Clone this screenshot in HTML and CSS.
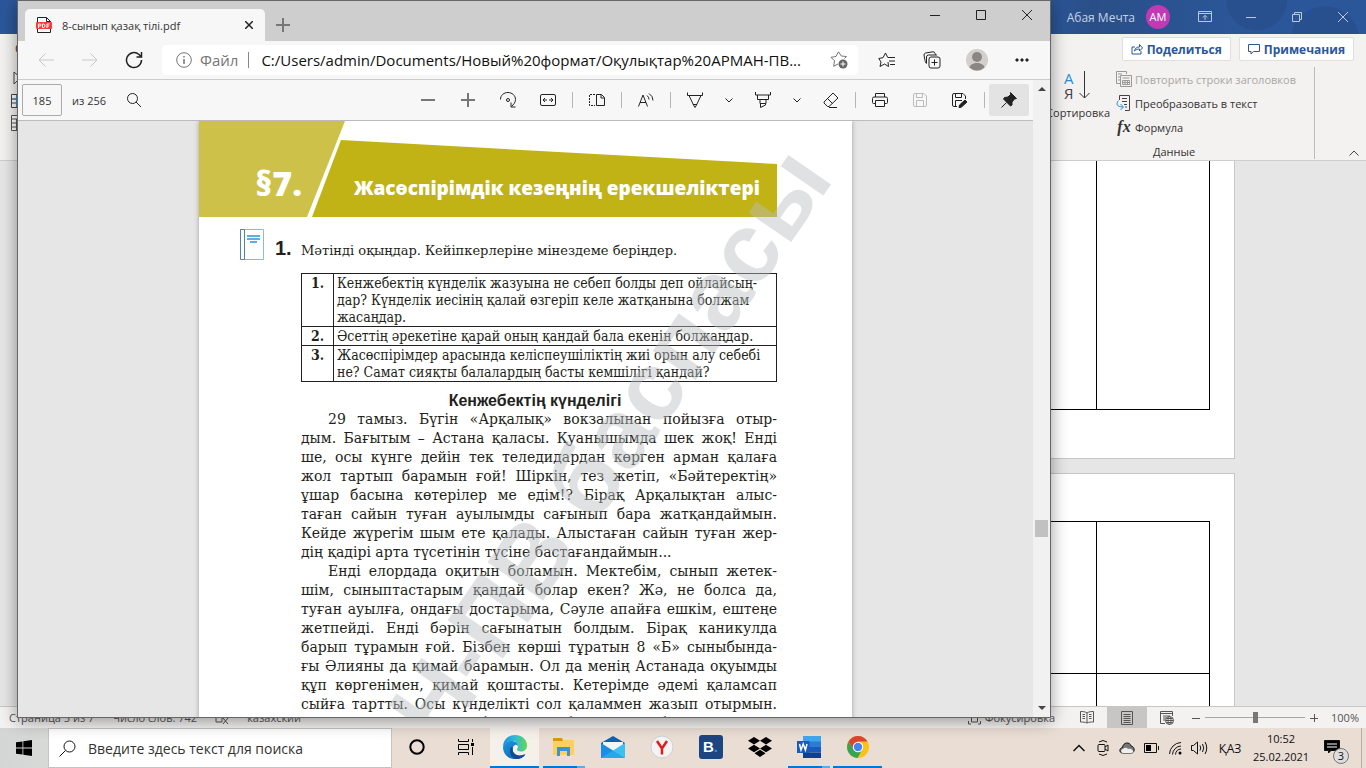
FILE: index.html
```html
<!DOCTYPE html>
<html lang="kk">
<head>
    <meta charset="UTF-8">
    <meta name="viewport" content="width=device-width, initial-scale=1.0">
    <title>8-сынып қазақ тілі.pdf</title>
    <link rel="stylesheet" href="styles.css">
</head>
<body>
    <div class="desktop">

        <!-- Word window -->
        <div class="word">
            <div class="word-title">
                <span class="user-name">Абая Мечта</span>
                <span class="user-badge">АМ</span>
                <button class="win-btn" aria-label="Параметры ленты"><svg width="14" height="12" viewBox="0 0 14 12"><path d="M.5.5h13v10H.5zM.5 2.500h13M7 9V4.500M4.800 6.500L7 4.300l2.200 2.200"/></svg></button>
                <button class="win-btn" aria-label="Свернуть"><svg width="10" height="10" viewBox="0 0 10 10"><path d="M0 5.500h10"/></svg></button>
                <button class="win-btn" aria-label="Окно"><svg width="10" height="10" viewBox="0 0 10 10"><path d="M.5 2.500h7v7h-7zM2.500 2.500v-2h7v7h-2"/></svg></button>
                <button class="win-btn" aria-label="Закрыть"><svg width="10" height="10" viewBox="0 0 10 10"><path d="M0 0l10 10M10 0L0 10"/></svg></button>
            </div>

            <div class="ribbon">
                <div class="ribbon-left">
                    <span class="ribbon-cut">С</span>
                    <svg width="14" height="16" viewBox="0 0 14 16"><path d="M3 1v12l3-3 2 5 2-1-2-5h4z" fill="#fff" stroke="#444"/></svg>
                    <svg width="16" height="14" viewBox="0 0 16 14"><path d="M.5.5h15v13H.5zM.5 5h15M.5 9h15M5.500.5v13" fill="#fff" stroke="#444"/><path d="M5.500 1v12M1 5h14" stroke="#2b8fd6"/></svg>
                    <svg width="16" height="16" viewBox="0 0 16 16"><path d="M.5.5h15v15H.5zM.5 4h15M.5 8h15M.5 12h15M5.500 4v11" fill="#fff" stroke="#555"/></svg>
                </div>
                <div class="ribbon-right">
                    <div class="ribbon-actions">
                        <button class="action"><svg width="12" height="12" viewBox="0 0 12 12"><path d="M4 4H1v7h9V8M3.500 8c.5-3 2.500-4 5-4V1.500L11.500 5 8.500 8V6c-2 0-3.500.5-5 2z"/></svg>Поделиться</button>
                        <button class="action"><svg width="12" height="12" viewBox="0 0 12 12"><path d="M.5 1.500h11v7h-6L3 11V8.500H.5z"/></svg>Примечания</button>
                    </div>
                    <div class="ribbon-body">
                        <button class="sort">
                            <svg width="30" height="30" viewBox="0 0 30 30"><text x="1" y="13" class="letter-a">А</text><text x="1" y="28" class="letter-ya">Я</text><path d="M21.500 0v27M16.500 22l5 5 5-5" fill="none" stroke="#333"/></svg>
                            Сортировка
                        </button>
                        <div class="data-group">
                            <button class="cmd off"><svg width="16" height="16" viewBox="0 0 16 16"><path d="M4 12.500H.5V.5h10V3M2 3h4M2 6h2M2 9h2" /><path d="M4.500 4.500h11v11h-11zM6.500 7h7M6.500 9.500h7v4h-7zM9 9.500v4M11.500 9.500v4M6.500 11.500h7"/></svg>Повторить строки заголовков</button>
                            <button class="cmd"><svg width="16" height="16" viewBox="0 0 16 16"><path d="M3.500 5V.5h10v15H9M6 3.500h5M6 6.500h5M8 9.500h3M9 12h2"/><path class="blue" d="M2.500 5.500C-.5 9 1 12 7 12M4.500 9l3 3-3 3"/></svg>Преобразовать в текст</button>
                            <button class="cmd"><i class="fx">fx</i>Формула</button>
                            <span class="group-name">Данные</span>
                        </div>
                        <button class="collapse" aria-label="Свернуть ленту"><svg width="10" height="6" viewBox="0 0 10 6"><path d="M.5 5.500L5 1l4.500 4.500" fill="none" stroke="#444"/></svg></button>
                    </div>
                </div>
            </div>

            <div class="word-area">
                <div class="sheet sheet-first">
                    <table class="grid"><tr><td></td><td></td></tr></table>
                </div>
                <div class="sheet sheet-next">
                    <table class="grid"><tr class="tall"><td></td><td></td></tr><tr class="tall"><td></td><td></td></tr></table>
                </div>
            </div>

            <div class="status">
                <span>Страница 5 из 7</span>
                <span>Число слов: 742</span>
                <svg width="14" height="14" viewBox="0 0 14 14"><path d="M1 1v10h6V1zM8 7l5 6M13 7l-5 6"/></svg>
                <span>казахский</span>
                <span class="status-gap"></span>
                <span class="focus"><svg width="13" height="14" viewBox="0 0 13 14"><path d="M.5 4V1H3M10 1h2.500v3M12.500 10v3H10M3 13H.5v-3M3.500 4h6v7h-6z"/></svg>Фокусировка</span>
                <button class="view" aria-label="Режим чтения"><svg width="14" height="13" viewBox="0 0 14 13"><path d="M7 2v10M7 2C5 .5 2.500.5.5.5v10.500c2.500 0 4.500 0 6.500 1 2-1 4-1 6.500-1V.5C11.500.5 9 .5 7 2M2.500 3.500H5M2.500 5.500H5M2.500 7.500H5M9 3.500h2.500M9 5.500h2.500M9 7.500h2.500"/></svg></button>
                <button class="view on" aria-label="Разметка страницы"><svg width="12" height="14" viewBox="0 0 12 14"><path d="M.5.5h11v13H.5zM2.500 3.500h7M2.500 5.500h7M2.500 7.500h7M2.500 9.500h7M2.500 11.500h7"/></svg></button>
                <button class="view" aria-label="Веб-документ"><svg width="14" height="14" viewBox="0 0 14 14"><path d="M5 12.500H.5V.5h12V5M.5 2.500h12M3 5h7M3 7h3M3 9h2"/><circle cx="9.500" cy="9.500" r="4"/><path d="M5.500 9.500h8M9.500 5.500c-2 2-2 6 0 8c2-2 2-6 0-8M6.500 7.500h6M6.500 11.500h6"/></svg></button>
                <button class="zoom-btn" aria-label="Уменьшить"><svg width="8" height="8" viewBox="0 0 8 8"><path d="M0 4.500h8"/></svg></button>
                <input class="zoom" type="range" min="0" max="100" value="50" aria-label="Масштаб">
                <button class="zoom-btn" aria-label="Увеличить"><svg width="8" height="8" viewBox="0 0 8 8"><path d="M0 4.500h8M4.500 0v8"/></svg></button>
                <span class="percent">100%</span>
            </div>
        </div>

        <!-- Browser window -->
        <div class="edge">
            <div class="tabs">
                <div class="tab">
                    <svg width="16" height="16" viewBox="0 0 16 16"><path d="M1.500.5h9l4 4v11h-13z" fill="#fff" stroke="#222"/><path d="M10.500.5v4h4" fill="none" stroke="#222"/><rect class="pdf-mark" y="5" width="16" height="7" rx="1"/><path d="M2.500 11V7h1.500q1 0 1 1t-1 1H2.500M6.500 7v3.500h1q1.500 0 1.500-1.700T7.500 7zM11 11V7h2.500M11 9h2" fill="none" stroke="#fff"/></svg>
                    <span class="tab-name">8-сынып қазақ тілі.pdf</span>
                    <button aria-label="Закрыть вкладку"><svg width="8" height="8" viewBox="0 0 8 8"><path d="M0 0l8 8M8 0L0 8" stroke="#222" stroke-width="1.500"/></svg></button>
                </div>
                <button class="new-tab" aria-label="Новая вкладка"><svg class="soft" width="14" height="14" viewBox="0 0 14 14"><path d="M7 0v14M0 7h14"/></svg></button>
                <div class="edge-controls">
                    <button aria-label="Свернуть"><svg width="10" height="10" viewBox="0 0 10 10"><path d="M0 5.500h10"/></svg></button>
                    <button aria-label="Развернуть"><svg width="10" height="10" viewBox="0 0 10 10"><path d="M.5.5h9v9h-9z"/></svg></button>
                    <button aria-label="Закрыть"><svg width="10" height="10" viewBox="0 0 10 10"><path d="M0 0l10 10M10 0L0 10"/></svg></button>
                </div>
            </div>

            <div class="nav">
                <button class="nav-btn dim" aria-label="Назад"><svg width="16" height="14" viewBox="0 0 16 14"><path d="M16 7H1M7.500.5L1 7l6.500 6.500"/></svg></button>
                <button class="nav-btn dim" aria-label="Вперед"><svg width="16" height="14" viewBox="0 0 16 14"><path d="M0 7h15M8.500.5L15 7l-6.500 6.500"/></svg></button>
                <button class="nav-btn refresh" aria-label="Обновить"><svg width="18" height="18" viewBox="0 0 18 18"><path d="M16.500 9A7.500 7.500 0 1 1 14 3.500l2 2M16.500 1v5h-5" stroke-width="1.500"/></svg></button>
                <div class="address">
                    <svg width="16" height="16" viewBox="0 0 16 16"><circle cx="8" cy="8" r="7.300"/><path d="M8 7v5M8 4v1.500" stroke-width="1.500"/></svg>
                    <label for="url">Файл</label>
                    <input id="url" type="text" value="C:/Users/admin/Documents/Новый%20формат/Оқулықтар%20АРМАН-ПВ...">
                    <button aria-label="Добавить в избранное"><svg width="18" height="18" viewBox="0 0 18 18"><path d="M14.500 7.500l2-2-5.200-.5L8.500.8 6 5.500l-5 .8 3.500 3.500-.8 5.500L8 13"/><circle cx="13" cy="13" r="4.500" fill="#666" stroke="none"/><path d="M13 10.500v5M10.500 13h5" stroke="#fff"/></svg></button>
                </div>
                <button class="nav-btn wide" aria-label="Избранное"><svg width="18" height="16" viewBox="0 0 18 16"><path d="M10 10l.5 4.500L6.500 12l-4.500 2.500 1-4.500L.8 6.500l4.200-.8L7.500 1l2 4M9.500 5.500H17M11 9h6M12 12.500h5"/></svg></button>
                <button class="nav-btn wide" aria-label="Коллекции"><svg width="18" height="18" viewBox="0 0 18 18"><rect x="6" y="6" width="11" height="11" rx="2"/><path d="M11.500 8.500v6M8.500 11.500h6M4 12.500C2 12 2.500 11 1.500 7L1 4q0-1.500 1.500-2L10 .8q1.500 0 2 1.500l.5 1.500M3.500 12V6q0-2 2-2H14"/></svg></button>
                <button class="nav-btn wide" aria-label="Профиль"><svg class="person" width="22" height="22" viewBox="0 0 22 22"><circle cx="11" cy="11" r="11" fill="#d2cfcc"/><circle cx="11" cy="8" r="5" fill="#8b8683"/><path d="M3.500 18.500c1-6 14-6 15 0a11 11 0 0 1-15 0z" fill="#8b8683"/></svg></button>
                <button class="nav-btn wide" aria-label="Меню"><svg width="14" height="4" viewBox="0 0 14 4"><path d="M1 1h2v2H1zM6 1h2v2H6zM11 1h2v2h-2z" fill="#222"/></svg></button>
            </div>

            <div class="viewer">
                <div class="viewer-main">
                    <div class="pdf-bar">
                        <input class="page-no" id="page" type="text" value="185">
                        <label for="page">из 256</label>
                        <button class="find" aria-label="Найти"><svg width="16" height="16" viewBox="0 0 16 16"><circle cx="6.500" cy="6.500" r="5"/><path d="M10 10l5 5"/></svg></button>
                        <div class="tools">
                            <button aria-label="Уменьшить"><svg class="soft" width="14" height="14" viewBox="0 0 14 14"><path d="M0 7h14"/></svg></button>
                            <button aria-label="Увеличить"><svg class="soft" width="14" height="14" viewBox="0 0 14 14"><path d="M0 7h14M7 0v14"/></svg></button>
                            <button aria-label="Повернуть"><svg width="16" height="16" viewBox="0 0 16 16"><path d="M.5 7.500C.5 3 4 .5 8 .5s7.500 3 7.500 7c0 3-2 5-4 7M11 10.500V15h4.500"/><circle cx="8" cy="8" r="1.500"/></svg></button>
                            <button aria-label="По ширине"><svg width="16" height="12" viewBox="0 0 16 12"><rect x=".5" y=".5" width="15" height="11" rx="1.500"/><path d="M3 6h4M9 6h4M5 4L3 6l2 2M11 4l2 2-2 2"/></svg></button>
                            <span class="sep"></span>
                            <button aria-label="Просмотр страницы"><svg width="16" height="12" viewBox="0 0 16 12"><path d="M7.500.5h5l3 3v8h-8zM12 .5V4h3.500"/><path d="M6 .5H.5v11H6" stroke-dasharray="2 1"/></svg></button>
                            <span class="sep"></span>
                            <button aria-label="Прочесть вслух"><svg width="16" height="14" viewBox="0 0 16 14"><path d="M.5 13.500L5 2l4.500 11.500M2 9.500h6M9 2.500q2 1.500 2 4M11 .5q4 2.500 4 7"/></svg></button>
                            <span class="sep"></span>
                            <button aria-label="Рисование"><svg width="16" height="16" viewBox="0 0 16 16"><path d="M.5.5v3h15v-3M2 3.500l4.500 9.500L8 15.500 9.500 13 14 3.500M6 12.500h4"/></svg></button>
                            <button class="drop" aria-label="Параметры пера"><svg width="8" height="5" viewBox="0 0 8 5"><path d="M.5.5L4 4 7.500.5"/></svg></button>
                            <button aria-label="Выделение"><svg width="16" height="16" viewBox="0 0 16 16"><path d="M.5 0v3h15V0M2.500 3v4.500h11V3M5 7.500v4h6v-4M5.500 11.500v4l5-2.500v-1.500"/></svg></button>
                            <button class="drop" aria-label="Параметры выделения"><svg width="8" height="5" viewBox="0 0 8 5"><path d="M.5.5L4 4 7.500.5"/></svg></button>
                            <button aria-label="Ластик"><svg width="16" height="16" viewBox="0 0 16 16"><path d="M1 10L10 1l5 5-9 8.500H4.500L1 11zM4.500 6.500l5 5M6 15.500h8"/></svg></button>
                            <span class="sep"></span>
                            <button aria-label="Печать"><svg width="16" height="14" viewBox="0 0 16 14"><path d="M3.500 10.500h-2q-1 0-1-1v-4q0-1.500 1.500-1.500h12q1.500 0 1.500 1.500v4q0 1-1 1h-2M3.500 4V.5h9V4M3.500 7.500h9v6h-9z"/></svg></button>
                            <button class="disabled" aria-label="Сохранить"><svg width="14" height="14" viewBox="0 0 14 14"><path d="M.5 2q0-1.500 1.500-1.500h9l2.500 2.500v9q0 1.500-1.500 1.500H2Q.5 13.500.5 12zM3.500.5v4h6v-4M3.500 13.500v-6h7v6"/></svg></button>
                            <button aria-label="Сохранить как"><svg width="16" height="15" viewBox="0 0 16 15"><path d="M13.500 6V3L11 .5H2Q.5.5.5 2v10q0 1.500 1.500 1.500h3M3.500.5v4h6v-4M3.500 13.500v-6H10"/><path d="M7.500 12l5.500-5 2 2-5.500 5-2.500.7z" fill="#222"/></svg></button>
                            <span class="sep"></span>
                            <button class="pinned" aria-label="Закрепить панель"><svg width="16" height="16" viewBox="0 0 16 16"><path d="M9.500.5l6 6-2 .5-2.500 3 0 3-1.500 1L2.500 7l1-1.500 3.500-.5 2.500-2.500z" fill="#222"/><path d="M5.500 10.500L.5 15.500"/></svg></button>
                        </div>
                    </div>

                    <div class="doc">
                        <article class="page">
                            <header class="section-head">
                                <div class="section-no">§7.</div>
                                <h1>Жасөспірімдік кезеңнің ерекшеліктері</h1>
                            </header>

                            <div class="task">
                                <svg width="24" height="31" viewBox="0 0 24 31"><path class="cover" d="M.5.5h23v30H.5z"/><path class="spine" d="M.5.5h4v30h-4z"/><path class="lines" d="M7 7h13M7 10h13M10 13h7"/></svg>
                                <b class="task-no">1.</b>
                                <span>Мәтінді оқыңдар. Кейіпкерлеріне мінездеме беріңдер.</span>
                            </div>

                            <table class="questions">
                                <tr><th>1.</th><td>Кенжебектің күнделік жазуына не себеп болды деп ойлайсың-<br>дар? Күнделік иесінің қалай өзгеріп келе жатқанына болжам<br>жасаңдар.</td></tr>
                                <tr><th>2.</th><td>Әсеттің әрекетіне қарай оның қандай бала екенін болжаңдар.</td></tr>
                                <tr><th>3.</th><td>Жасөспірімдер арасында келіспеушіліктің жиі орын алу себебі<br>не? Самат сияқты балалардың басты кемшілігі қандай?</td></tr>
                            </table>

                            <div class="story">
                                <h2>Кенжебектің күнделігі</h2>
                                <p>29 тамыз. Бүгін «Арқалық» вокзалынан пойызға отыр-<br>дым. Бағытым – Астана қаласы. Қуанышымда шек жоқ! Енді<br>ше, осы күнге дейін тек теледидардан көрген арман қалаға<br>жол тартып барамын ғой! Шіркін, тез жетіп, «Бәйтеректің»<br>ұшар басына көтерілер ме едім!? Бірақ Арқалықтан алыс-<br>таған сайын туған ауылымды сағынып бара жатқандаймын.<br>Кейде жүрегім шым ете қалады. Алыстаған сайын туған жер-</p>
                                <p class="last-line">дің қадірі арта түсетінін түсіне бастағандаймын...</p>
                                <p>Енді елордада оқитын боламын. Мектебім, сынып жетек-<br>шім, сыныптастарым қандай болар екен? Жә, не болса да,<br>туған ауылға, ондағы достарыма, Сәуле апайға ешкім, ештеңе<br>жетпейді. Енді бәрін сағынатын болдым. Бірақ каникулда<br>барып тұрамын ғой. Бізбен көрші тұратын 8 «Б» сыныбында-<br>ғы Әлияны да қимай барамын. Ол да менің Астанада оқуымды<br>құп көргенімен, қимай қоштасты. Кетерімде әдемі қаламсап<br>сыйға тартты. Осы күнделікті сол қаламмен жазып отырмын.<br>Айналама қарасам, бәрі де бейтаныс, бөлек жандар</p>
                            </div>

                            <svg class="watermark" width="653" height="600" viewBox="0 0 653 600"><text transform="translate(636 58) rotate(-55.300)">АРМАН-ПВ баспасы</text></svg>
                        </article>
                    </div>
                </div>

                <div class="scroll">
                    <svg width="8" height="4" viewBox="0 0 8 4"><path d="M0 4l4-4 4 4z" fill="#444"/></svg>
                    <span class="thumb"></span>
                    <svg width="8" height="4" viewBox="0 0 8 4"><path d="M0 0l4 4 4-4z" fill="#444"/></svg>
                </div>
            </div>
        </div>
    </div>

    <!-- Taskbar -->
    <div class="taskbar">
        <button class="start" aria-label="Пуск"><svg width="16" height="16" viewBox="0 0 16 16"><path d="M0 2.300L6.500 1.400v6.200H0zM7.300 1.200L16 0v7.600H7.300zM0 8.400h6.500v6.200L0 13.700zM7.300 8.400H16V16l-8.700-1.200z"/></svg></button>
        <label class="search">
            <svg width="17" height="17" viewBox="0 0 17 17"><circle cx="10.500" cy="6.500" r="5.500"/><path d="M6.500 10.500L.5 16.500"/></svg>
            <input type="text" placeholder="Введите здесь текст для поиска" aria-label="Поиск">
        </label>
        <button class="task-btn" aria-label="Кортана"><svg width="16" height="16" viewBox="0 0 16 16"><circle cx="8" cy="8" r="6.700" fill="none" stroke="#000" stroke-width="2"/></svg></button>
        <button class="task-btn" aria-label="Представление задач"><svg width="18" height="16" viewBox="0 0 18 16"><path d="M1.500 0v2.500h10V0M1.500 16v-2.500h10V16M1.500 5.500h10v5h-10zM15.500 0v3M15.500 8v8" fill="none" stroke="#000"/><path d="M14 4h3v3h-3z"/></svg></button>
        <button class="task-btn active running" aria-label="Edge">
            <svg width="26" height="26" viewBox="0 0 26 26">
                <defs>
                    <linearGradient id="eg1" x1="0" x2="1"><stop offset="0" stop-color="#1d8fe0"/><stop offset=".5" stop-color="#31bdd6"/><stop offset="1" stop-color="#62d84e"/></linearGradient>
                    <linearGradient id="eg2" x1="0" y1="0" x2="1" y2="1"><stop offset="0" stop-color="#1b9de2"/><stop offset="1" stop-color="#0f52a0"/></linearGradient>
                </defs>
                <path d="M1 13C1 6 6 1 13 1c8 0 12 5.500 12 10.500 0 4-3 6-6 6-2.500 0-4-1-4-2s1-1.500 1-3.500C16 9 13 7 9.500 7 5 7 2 10 1 13z" fill="url(#eg1)"/>
                <path d="M1 13c1-4 4-6 8-6 4.500 0 7 2.500 7 5-1-1-2-1.500-3-1-4 2-3 9 3 10.500 3 .8 6 0 7.500-1C21 24 17 25.500 13.500 25 6 25 1 20 1 13z" fill="url(#eg2)"/>
                <path d="M9 13c-2 4-1 10 5 12 4 0 7.500-1.500 9.500-5-3 1.500-7 2-10 .5C11 19 10 16.500 11 13.500z" fill="#104b94"/>
            </svg>
        </button>
        <button class="task-btn running multi" aria-label="Проводник"><svg width="22" height="18" viewBox="0 0 22 18"><path d="M0 0h8l2 2h11v15H0z" fill="#fbd05f"/><path d="M0 0h9l1 3H0z" fill="#d99513"/><path d="M4 9h13v9h-3v-5H7v5H4z" fill="#3a94d6"/></svg></button>
        <button class="task-btn" aria-label="Почта"><svg width="24" height="22" viewBox="0 0 24 22"><path d="M0 7L12 0l12 7v5H0z" fill="#0a64b0"/><path d="M2 6h20v8L12 18 2 13z" fill="#f5f5f5"/><path d="M0 7l24 15H0z" fill="#1b8ee0"/><path d="M24 7v15L12 14.500z" fill="#3cc0f2"/><path d="M0 22l12-7.500L24 22z" fill="#28a8ea"/></svg></button>
        <button class="task-btn" aria-label="Яндекс"><svg width="24" height="24" viewBox="0 0 24 24"><circle cx="12" cy="12" r="11" fill="#f4f4f4" stroke="#d0d0d0"/><path d="M7 6l5 7.500L17 6M12 13v6.500" fill="none" stroke="#e21c1c" stroke-width="2.500"/></svg></button>
        <button class="task-btn" aria-label="Booking"><span class="booking">B<i>.</i></span></button>
        <button class="task-btn" aria-label="Dropbox"><svg width="24" height="20" viewBox="0 0 24 20"><path d="M6 0l6 3.700-6 3.800L0 3.700zM18 0l6 3.700-6 3.800-6-3.800zM6 7.700l6 3.800-6 3.800-6-3.800zM18 7.700l6 3.800-6 3.800-6-3.800zM12 12.700l5.500 3.600L12 20l-5.500-3.700z"/></svg></button>
        <button class="task-btn running multi" aria-label="Word"><svg width="24" height="22" viewBox="0 0 24 22"><path d="M6 0h18v6H6z" fill="#41a5ee"/><path d="M6 5.500h18V11H6z" fill="#2b7cd3"/><path d="M6 11h18v5.500H6z" fill="#185abd"/><path d="M6 16.500h18V22H6z" fill="#103f91"/><path d="M0 5h12.500v12H0z" fill="#185abd"/><path d="M2.500 8l1.500 6 2.200-6 2.200 6L10 8" fill="none" stroke="#fff" stroke-width="1.500"/></svg></button>
        <button class="task-btn running" aria-label="Chrome"><svg width="22" height="22" viewBox="0 0 22 22"><circle cx="11" cy="11" r="11" fill="#fbc116"/><path d="M11 5.500h9.500A11 11 0 0 0 1.500 5.500L6 13z" fill="#dc4437"/><path d="M1.500 5.500A11 11 0 0 0 10.500 22L15 14l-9-1z" fill="#35a552"/><circle cx="11" cy="11" r="5.200" fill="#fff"/><circle cx="11" cy="11" r="4.200" fill="#4386f4"/></svg></button>

        <div class="tray">
            <button aria-label="Скрытые значки"><svg width="12" height="8" viewBox="0 0 12 8"><path d="M.5 7L6 1.500 11.500 7" stroke-width="1.500"/></svg></button>
            <button aria-label="Собрание"><svg width="12" height="16" viewBox="0 0 12 16"><path d="M2 2q4-3 8 0M2 14q4 3 8 0"/><rect x="1" y="4.500" width="7" height="7" rx="1"/><path d="M8 7l3-2v6L8 9"/></svg></button>
            <button aria-label="Облако"><svg width="16" height="12" viewBox="0 0 16 12"><path d="M3.500 11C0 11 0 6 3.500 5.500 4 0 11-.5 12 4c4 .5 4.500 7 0 7z" fill="#777"/><path d="M3.500 11c-2-1-1.500-4 .5-4 2-2 4-1 5 0 3-1 5 1 5.500 3l-2 1z" fill="#eee" stroke="none"/></svg></button>
            <button aria-label="Батарея"><svg width="15" height="10" viewBox="0 0 15 10"><path d="M.5.5h12v9H.5zM14.500 3v4"/><path d="M2 2h5v6H2z" fill="#000" stroke="none"/></svg></button>
            <button aria-label="Сеть"><svg width="13" height="13" viewBox="0 0 13 13"><path d="M.5 12A12 12 0 0 1 12 .5M3.500 12.500A9 9 0 0 1 12 4M6.500 12.500A6 6 0 0 1 12 7"/><circle cx="11" cy="11" r="1.500" fill="#000" stroke="none"/></svg></button>
            <button aria-label="Звук"><svg width="17" height="14" viewBox="0 0 17 14"><path d="M.5 4.500h2L6.500 1v12L2.500 9.500h-2zM9 4.500q1.500 2.500 0 5M11.500 3q2.500 4 0 8M14 1q3.500 6 0 12"/></svg></button>
            <span class="lang">ҚАЗ</span>
            <div class="clock"><span>10:52</span><span>25.02.2021</span></div>
            <button class="notes" aria-label="Уведомления"><svg width="17" height="16" viewBox="0 0 17 16"><path d="M.5.5h15v10H7L4.500 13v-2.500h-4z" fill="#000"/><path d="M3 4h10M3 7h10" stroke="#fff"/></svg><span class="count">3</span></button>
        </div>
    </div>
</body>
</html>
```
FILE: styles.css
```css
* {
    box-sizing: border-box;
}

body {
    margin: 0;
    height: 100vh;
    display: flex;
    flex-direction: column;
    overflow: hidden;
    font-family: "Open Sans", "Noto Sans", sans-serif;
    font-size: 12px;
    color: #333;
}

button {
    display: flex;
    align-items: center;
    justify-content: center;
    padding: 0;
    border: none;
    background: none;
    font: inherit;
    color: inherit;
    white-space: nowrap;
}

input {
    font: inherit;
    color: inherit;
    border: none;
    outline: none;
    min-width: 0;
}

svg {
    flex: none;
}

.desktop {
    position: relative;
    flex: 1;
    min-height: 0;
}

/* Word */
.word {
    height: 100%;
    display: flex;
    flex-direction: column;
    background: #e6e6e6;
}

.word-title {
    flex: none;
    height: 34px;
    display: flex;
    justify-content: flex-end;
    align-items: center;
    color: #c5d1e5;
    background: radial-gradient(circle at 92% 0, #28508f 30px, transparent 31px),
                radial-gradient(circle at 97% 120%, #28508f 34px, transparent 35px),
                linear-gradient(90deg, #2b579a 76%, #2a4f88 80%, #2b579a 92%);
}

.word-title svg {
    fill: none;
    stroke: #b9c8df;
}

.user-badge {
    width: 24px;
    height: 24px;
    margin: 0 12px 0 11px;
    border-radius: 50%;
    background: #c239b3;
    color: #fff;
    font-size: 11px;
    line-height: 24px;
    text-align: center;
}

.win-btn {
    width: 46px;
    height: 32px;
}

.ribbon {
    flex: none;
    display: flex;
    justify-content: space-between;
    height: 127px;
    background: #f3f2f1;
    border-bottom: 1px solid #d0cecc;
}

.ribbon-left {
    display: flex;
    flex-direction: column;
    gap: 7px;
    padding: 6px 0 0 11px;
}

.ribbon-cut {
    height: 24px;
    padding-left: 4px;
    line-height: 18px;
}

.ribbon-right {
    display: flex;
    flex-direction: column;
}

.ribbon-actions {
    display: flex;
    justify-content: flex-end;
    gap: 8px;
    padding: 3px 12px 0 0;
}

.action {
    height: 24px;
    padding: 0 8px;
    gap: 4px;
    border: 1px solid #e1dfdd;
    border-radius: 2px;
    background: #fff;
    color: #2b579a;
    font-weight: 700;
}

.action svg {
    fill: none;
    stroke: #2b579a;
}

.ribbon-body {
    flex: 1;
    display: flex;
    justify-content: flex-end;
    font-size: 11px;
}

.sort {
    flex-direction: column;
    justify-content: flex-start;
    gap: 4px;
    padding-top: 10px;
    margin-right: 6px;
}

.letter-a,
.letter-ya {
    font-size: 15px;
    fill: #444;
}

.letter-a {
    fill: #2b8fd6;
}

.data-group {
    display: flex;
    flex-direction: column;
    width: 199px;
    margin: 6px 0 1px;
    border-right: 1px solid #bbb;
}

.cmd {
    justify-content: flex-start;
    gap: 3px;
    height: 24px;
}

.cmd svg {
    fill: none;
    stroke: #444;
}

.cmd .blue {
    stroke: #2b8fd6;
}

.cmd.off {
    color: #a9a7a5;
}

.cmd.off svg {
    stroke: #999;
}

.fx {
    width: 16px;
    font: italic bold 16px "Liberation Serif", serif;
}

.group-name {
    margin-top: auto;
    padding-right: 82px;
    text-align: center;
}

.collapse {
    width: 51px;
    padding: 0 0 4px 26px;
    align-items: flex-end;
}

.word-area {
    flex: 1;
    min-height: 0;
    overflow: hidden;
    display: flex;
    flex-direction: column;
    align-items: flex-end;
    gap: 14px;
    padding-right: 131px;
}

.sheet {
    flex: none;
    width: 794px;
    padding: 0 24px;
    background: #fff;
    border: 1px solid #c6c6c6;
}

.sheet-first {
    height: 298px;
    border-top: none;
}

.sheet-first td {
    height: 248px;
}

.sheet-next {
    padding-top: 47px;
}

.grid {
    width: 100%;
    border-collapse: collapse;
}

.grid td {
    border: 1px solid #000;
    padding: 0;
}

.sheet-first td {
    border-top: none;
}

.grid td:last-child {
    width: 113px;
}

.tall td {
    height: 152px;
}

.status {
    flex: none;
    height: 22px;
    display: flex;
    align-items: center;
    padding-left: 9px;
    background: #f3f2f1;
    border-top: 1px solid #c6c6c6;
    color: #555;
    font-size: 11px;
    gap: 18px;
}

.status svg {
    fill: none;
    stroke: #555;
}

.status-gap {
    flex: 1;
}

.focus {
    display: flex;
    align-items: center;
    gap: 4px;
    margin-right: -6px;
}

.view {
    width: 40px;
    height: 100%;
    margin-right: -18px;
}

.view.on {
    background: #c8c6c4;
}

.zoom-btn {
    width: 18px;
    height: 100%;
    margin-right: -18px;
}

.zoom + .zoom-btn {
    margin-left: -18px;
}

.zoom {
    appearance: none;
    width: 100px;
    height: 12px;
    margin: 0;
    background: linear-gradient(#a6a6a6, #a6a6a6) center / 100% 1px no-repeat;
}

.zoom::-webkit-slider-thumb {
    appearance: none;
    width: 5px;
    height: 11px;
    background: #777;
}

.percent {
    padding: 0 7px 0 8px;
}

/* Browser */
.edge {
    position: absolute;
    left: 17px;
    right: 315px;
    top: 0;
    bottom: 10px;
    display: flex;
    flex-direction: column;
    border: 1px solid #666;
    background: #f7f7f7;
    box-shadow: 0 3px 16px rgba(0, 0, 0, 0.4);
}

.edge svg {
    fill: none;
    stroke: #222;
}

.edge .soft {
    stroke: #777;
    stroke-width: 2;
}

.edge .person,
.edge .pdf-mark {
    stroke: none;
}

.pdf-mark {
    fill: #f33f3f;
}

.tabs {
    flex: none;
    height: 40px;
    display: flex;
    align-items: flex-end;
    padding-left: 7px;
    background: #cecece;
}

.tab {
    display: flex;
    align-items: center;
    width: 240px;
    height: 32px;
    padding: 0 12px 0 11px;
    border-radius: 5px 5px 0 0;
    background: #f7f7f7;
}

.tab-name {
    flex: 1;
    padding-left: 10px;
    font-size: 11px;
}

.new-tab {
    width: 36px;
    height: 32px;
}

.edge-controls {
    display: flex;
    align-self: flex-start;
    margin-left: auto;
}

.edge-controls button {
    width: 46px;
    height: 28px;
}

.nav {
    flex: none;
    display: flex;
    align-items: center;
    height: 39px;
    padding: 0 6px;
    border-bottom: 1px solid #ccc;
}

.nav-btn {
    width: 44px;
    height: 32px;
}

.nav-btn.wide {
    width: 45px;
}

.nav-btn.dim svg {
    stroke: #c8c8c8;
}

.refresh {
    margin-right: 6px;
}

.address {
    flex: 1;
    display: flex;
    align-items: center;
    height: 30px;
    margin-right: 6px;
    padding: 0 10px 0 14px;
    border-radius: 4px;
    background: #fff;
    font-size: 15px;
}

.address svg {
    stroke: #757575;
}

.address label {
    margin: 0 12px 0 8px;
    padding-right: 10px;
    border-right: 1px solid #888;
    line-height: 16px;
    color: #757575;
}

.address input {
    flex: 1;
    padding: 0;
    color: #111;
}

.viewer {
    flex: 1;
    min-height: 0;
    display: flex;
}

.viewer-main {
    flex: 1;
    min-width: 0;
    display: flex;
    flex-direction: column;
}

.pdf-bar {
    flex: none;
    display: flex;
    align-items: center;
    height: 41px;
    padding: 0 4px;
    border-bottom: 1px solid #bbb;
}

.page-no {
    width: 40px;
    height: 32px;
    margin-right: 10px;
    padding: 0;
    border: 1px solid #aaa;
    border-radius: 2px;
    background: #f7f7f7;
    text-align: center;
}

.page-no,
.page-no + label {
    font-size: 11px;
}

.find {
    width: 40px;
    height: 32px;
    margin-left: 8px;
}

.tools {
    display: flex;
    align-items: center;
    margin-left: auto;
}

.tools button {
    width: 40px;
    height: 32px;
}

.tools .drop {
    width: 28px;
}

.tools .disabled svg {
    stroke: #bbb;
}

.tools .pinned {
    background: #e3e3e3;
    border-radius: 2px;
}

.sep {
    width: 1px;
    height: 16px;
    margin: 0 4px;
    background: #b5b5b5;
}

.doc {
    flex: 1;
    min-height: 0;
    overflow: hidden;
    display: flex;
    justify-content: center;
    align-items: flex-start;
    background: #e6e6e6;
}

.page {
    position: relative;
    width: 653px;
    background: #fff;
    box-shadow: 0 0 5px rgba(0, 0, 0, 0.3);
    color: #231f20;
    font-family: "DejaVu Serif", serif;
    font-size: 14px;
}

.section-head {
    display: flex;
    height: 96px;
    font-family: "Open Sans", "Noto Sans", sans-serif;
    font-weight: 800;
    color: #fff;
}

.section-no {
    width: 146px;
    padding: 40px 43px 0 0;
    clip-path: polygon(0 0, 146px 0, 108px 100%, 0 100%);
    background: #cdc14a;
    font-size: 34px;
    line-height: 44px;
    text-align: right;
}

.section-head h1 {
    width: 465px;
    margin: 0 0 0 -33px;
    padding: 52px 0 0 42px;
    clip-path: polygon(29px 19px, 100% 43px, 100% 100%, 0 100%);
    background: #c1b315;
    font-size: 19px;
    font-weight: 800;
    line-height: 30px;
    white-space: nowrap;
}

.task {
    display: flex;
    align-items: center;
    height: 32px;
    margin: 11px 0 13px 41px;
    font-size: 13px;
}

.task-no {
    width: 37px;
    padding: 9px 0 0 11px;
    font: bold 20px "Liberation Sans Narrow", "Liberation Sans", sans-serif;
}

.task span {
    padding-top: 13px;
    white-space: nowrap;
}

.questions {
    width: 476px;
    margin: 0 0 0 102px;
    border-collapse: collapse;
    font-family: "DejaVu Serif Condensed", "DejaVu Serif", serif;
    line-height: 17px;
}

.questions th,
.questions td {
    padding: 1px 3px 0;
    border: 1px solid #231f20;
    vertical-align: top;
    text-align: left;
    white-space: nowrap;
}

.questions th {
    width: 32px;
    text-align: center;
}

.story {
    width: 476px;
    margin-left: 102px;
    line-height: 19px;
}

.story h2 {
    margin: 9px 0 0;
    padding-right: 8px;
    font: bold 16px/19px "Liberation Sans", sans-serif;
    text-align: center;
}

.story p {
    margin: 0;
    text-indent: 27px;
    text-align: justify;
    text-align-last: justify;
    white-space: nowrap;
}

.story .last-line {
    text-indent: 0;
    text-align-last: left;
}

.watermark {
    position: absolute;
    left: 0;
    top: 0;
}

.watermark text {
    font: bold 98px "Liberation Sans", sans-serif;
    text-anchor: end;
    fill: #b9bdc2;
    fill-opacity: 0.45;
    stroke: none;
}

.page .task svg,
.scroll svg {
    stroke: none;
}

.cover {
    fill: #fff;
    stroke: #8fb9d6;
}

.spine {
    fill: #fff;
    stroke: #4a86b4;
}

.lines {
    stroke: #58b0e3;
    stroke-width: 2;
}

.scroll {
    width: 17px;
    display: flex;
    flex-direction: column;
    align-items: center;
    padding: 7px 0;
    background: #f1f1f1;
}

.thumb {
    width: 13px;
    height: 17px;
    margin: 429px 0 auto;
    background: #c1c1c1;
}

/* Taskbar */
.taskbar {
    flex: none;
    height: 40px;
    display: flex;
    align-items: stretch;
    background: linear-gradient(90deg, #d2d6d5, #d8dad6 4%, #e9ddd4 28%, #e9ddd4);
    color: #111;
}

.start {
    width: 48px;
}

.search {
    display: flex;
    align-items: center;
    width: 344px;
    padding-left: 10px;
    gap: 12px;
    border: 1px solid #c4c4c4;
    background: #fff;
}

.search svg {
    fill: none;
    stroke: #111;
}

.search input {
    flex: 1;
    padding: 0;
    font-size: 14px;
}

.search input::placeholder {
    color: #333;
}

.task-btn {
    width: 49px;
    border-bottom: 2px solid transparent;
}

.active {
    background: #f6f0eb;
}

.running {
    border-bottom-color: #0078d7;
}

.multi {
    border-image: linear-gradient(90deg, transparent 10%, #0078d7 10%, #0078d7 76%, #62a9e0 76%, #62a9e0 92%, transparent 92%) 1;
}

.booking {
    width: 24px;
    height: 24px;
    border-radius: 3px;
    background: #1d4580;
    color: #fff;
    font: bold 15px/24px "Liberation Sans", sans-serif;
}

.booking i {
    font-style: normal;
    color: #18a0e0;
}

.tray {
    display: flex;
    align-items: center;
    margin-left: auto;
    margin-right: 4px;
    padding-right: 10px;
    border-right: 1px solid #b8aea6;
}

.tray button {
    width: 24px;
    height: 40px;
}

.tray svg {
    fill: none;
    stroke: #111;
}

.lang {
    width: 38px;
    text-align: center;
}

.clock {
    display: flex;
    flex-direction: column;
    width: 64px;
    text-align: center;
    font-size: 11px;
    line-height: 18px;
}

.tray .notes {
    position: relative;
    width: 38px;
}

.count {
    position: absolute;
    right: 2px;
    bottom: 4px;
    width: 16px;
    height: 16px;
    border: 1px solid #777;
    border-radius: 50%;
    background: #ddd;
    font-size: 11px;
    line-height: 14px;
}
```
